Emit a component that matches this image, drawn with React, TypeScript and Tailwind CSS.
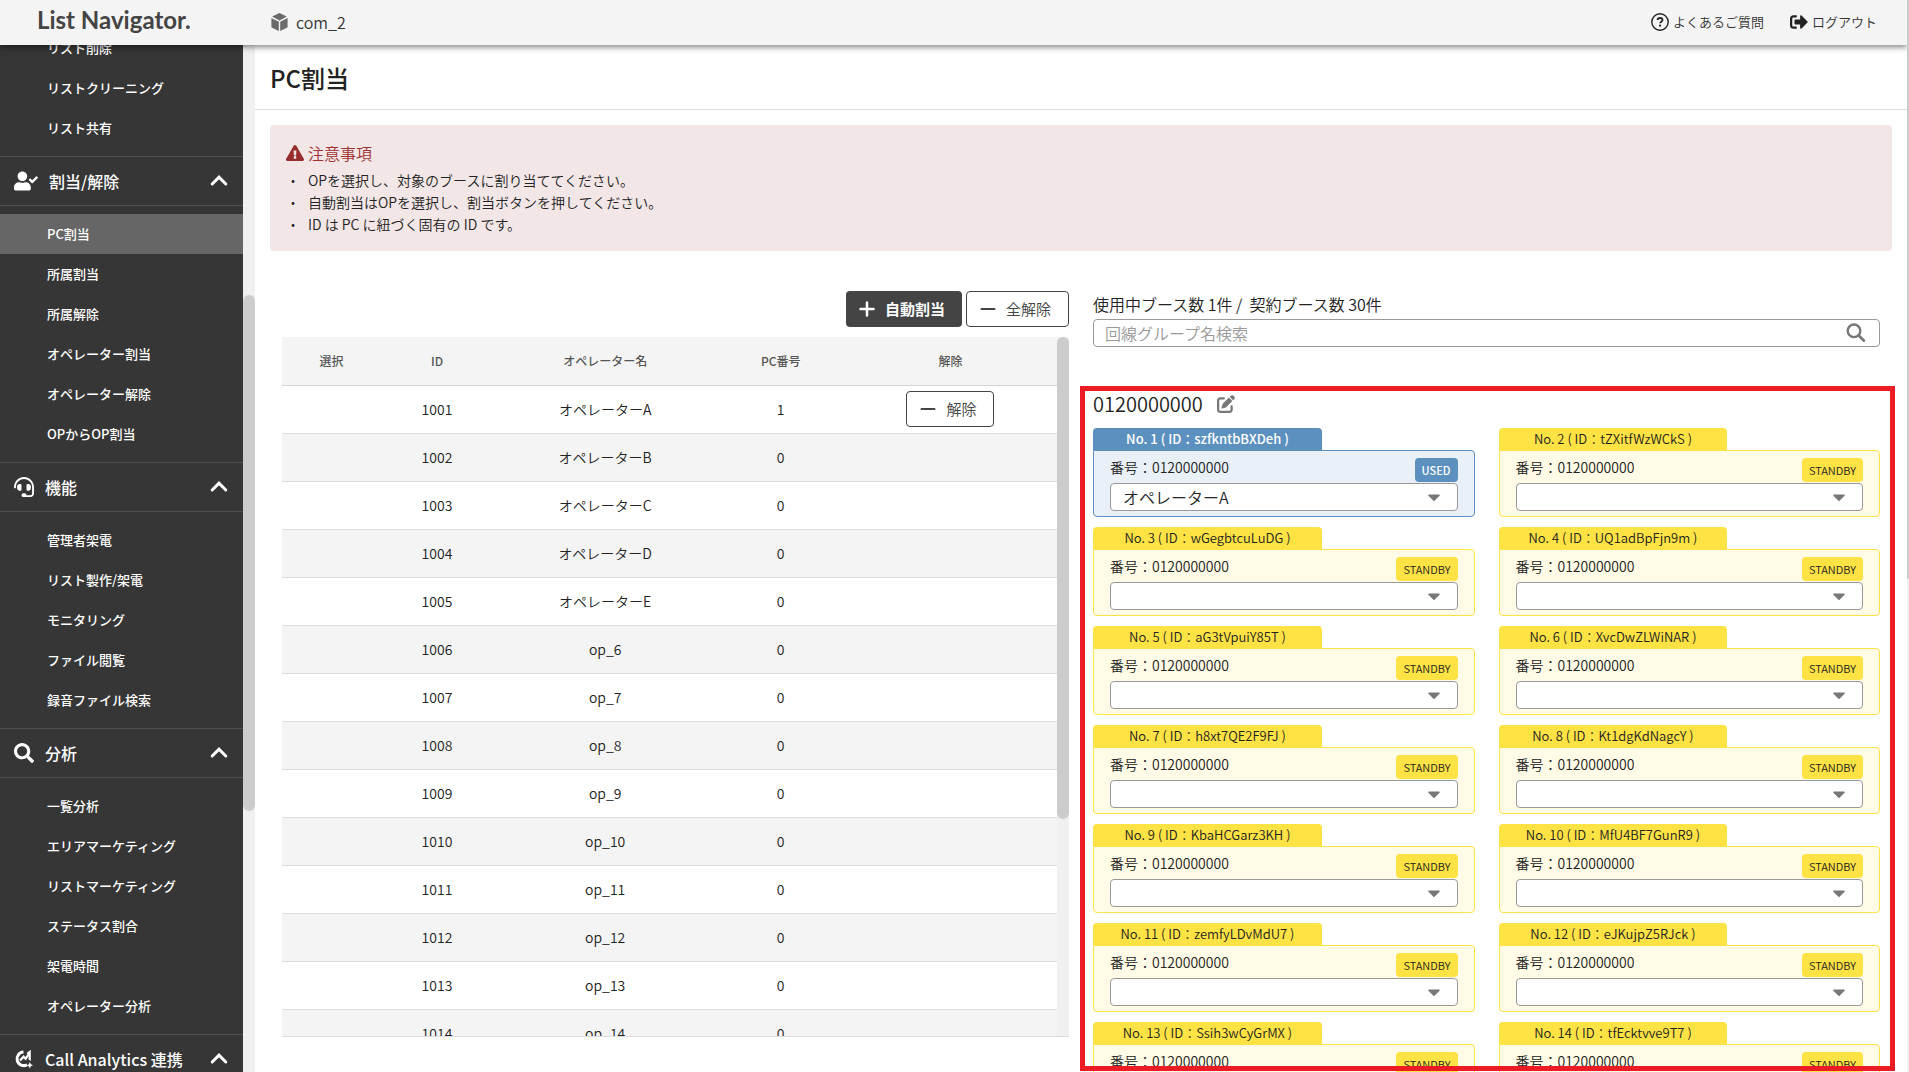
import { useState } from 'react';
import type { ReactNode } from 'react';
import { FaUserCheck, FaHeadset, FaSearch, FaExclamationTriangle, FaSignOutAlt, FaCaretDown } from 'react-icons/fa';
import { FaPenToSquare } from 'react-icons/fa6';

type MenuSection = {
  title: string;
  icon: ReactNode;
  items: string[];
};

const listItems = ['リスト削除', 'リストクリーニング', 'リスト共有'];

const sections: MenuSection[] = [
  {
    title: '割当/解除',
    icon: <FaUserCheck className="h-5 w-6" />,
    items: ['PC割当', '所属割当', '所属解除', 'オペレーター割当', 'オペレーター解除', 'OPからOP割当'],
  },
  {
    title: '機能',
    icon: <FaHeadset className="h-5 w-5" />,
    items: ['管理者架電', 'リスト製作/架電', 'モニタリング', 'ファイル閲覧', '録音ファイル検索'],
  },
  {
    title: '分析',
    icon: <FaSearch className="h-5 w-5" />,
    items: ['一覧分析', 'エリアマーケティング', 'リストマーケティング', 'ステータス割合', '架電時間', 'オペレーター分析'],
  },
  {
    title: 'Call Analytics 連携',
    icon: <CallAnalyticsIcon />,
    items: [],
  },
];

const operators = [
  ...['A', 'B', 'C', 'D', 'E'].map((letter, i) => ({ id: 1001 + i, name: `オペレーター${letter}`, pc: i === 0 ? 1 : 0 })),
  ...Array.from({ length: 10 }, (_, i) => ({ id: 1006 + i, name: `op_${6 + i}`, pc: 0 })),
];

const boothIds = [
  'szfkntbBXDeh',
  'tZXitfWzWCkS',
  'wGegbtcuLuDG',
  'UQ1adBpFjn9m',
  'aG3tVpuiY85T',
  'XvcDwZLWiNAR',
  'h8xt7QE2F9FJ',
  'Kt1dgKdNagcY',
  'KbaHCGarz3KH',
  'MfU4BF7GunR9',
  'zemfyLDvMdU7',
  'eJKujpZ5RJck',
  'Ssih3wCyGrMX',
  'tfEcktvve9T7',
];

const PHONE = '0120000000';

function CallAnalyticsIcon() {
  return (
    <svg className="h-5 w-5" viewBox="0 0 20 20" fill="none">
      <path d="M9.500 3A6.800 6.800 0 1 0 13 15.800" stroke="currentColor" strokeWidth="3" />
      <path d="m6 11.500 3.600-3.800 2 2L15.500 4" stroke="currentColor" strokeWidth="2.200" />
      <path d="M12.500 4 16.800.800V12l-2.300-1.600V5.800z" fill="currentColor" />
      <path d="m15.800 13 1 2.200 2.200 1-2.200 1-1 2.200-1-2.200-2.200-1 2.200-1z" fill="currentColor" />
    </svg>
  );
}

function CubeIcon() {
  return (
    <svg className="h-[18px] w-[17px]" viewBox="0 0 17 18" fill="#6b6b6b">
      <path d="M8.500 0 15.800 3.600 8.500 7.400 1.200 3.600z" />
      <path d="M.400 4.900 7.800 8.700V18L1.100 14.800a1.200 1.200 0 0 1-.700-1.100z" />
      <path d="M16.600 4.900 9.200 8.700V18l6.700-3.200a1.200 1.200 0 0 0 .700-1.100z" />
    </svg>
  );
}

function QuestionIcon() {
  return (
    <svg className="h-[18px] w-[18px]" viewBox="0 0 18 18" fill="none" stroke="#222">
      <circle cx="9" cy="9" r="8.200" strokeWidth="1.400" />
      <path d="M6.600 7.100c0-1.300 1-2.100 2.400-2.100s2.500.800 2.500 2c0 1.600-2.400 1.700-2.400 3.300" strokeWidth="1.800" />
      <circle cx="9.100" cy="12.700" r="1.100" fill="#222" stroke="none" />
    </svg>
  );
}

function Chevron() {
  return (
    <svg className="h-[18px] w-[18px]" viewBox="0 0 18 18" fill="none" stroke="#fff" strokeWidth="3" strokeLinecap="round">
      <path d="m2.200 12 6.800-6.800 6.800 6.800" />
    </svg>
  );
}

function MinusIcon() {
  return (
    <svg className="h-4 w-4" viewBox="0 0 16 16" stroke="#444" strokeWidth="2" strokeLinecap="round">
      <path d="M1.500 8h13" />
    </svg>
  );
}

function PlusIcon() {
  return (
    <svg className="h-4 w-4" viewBox="0 0 16 16" stroke="#fff" strokeWidth="2.500" strokeLinecap="round">
      <path d="M1.500 8h13M8 1.500v13" />
    </svg>
  );
}

function Header() {
  return (
    <header className="relative z-10 flex h-[45px] shrink-0 items-center bg-[#f4f4f4] pr-[30px] pb-0.5 shadow-[0_2px_6px_rgba(0,0,0,0.5)]">
      <div className="w-[271px] shrink-0 pb-1 pl-[37px] font-[Lato] text-2xl font-bold text-[#444]">
        List Navigator.
      </div>
      <div className="flex items-center gap-2 text-base text-[#333]">
        <CubeIcon />
        com_2
      </div>
      <nav className="ml-auto flex items-center gap-[26px] text-[13px] text-[#333]">
        <a href="#" className="flex items-center gap-1">
          <QuestionIcon />
          よくあるご質問
        </a>
        <a href="#" className="flex items-center gap-1">
          <FaSignOutAlt className="h-[18px] w-[18px] text-[#222]" />
          ログアウト
        </a>
      </nav>
    </header>
  );
}

function MenuItems({ items }: { items: string[] }) {
  return (
    <ul className="py-2">
      {items.map((item) => (
        <li key={item}>
          <a
            href="#"
            className={`flex h-10 items-center pl-[47px] text-[13px] font-medium ${item === 'PC割当' ? 'bg-[#666]' : ''}`}
          >
            {item}
          </a>
        </li>
      ))}
    </ul>
  );
}

function Sidebar() {
  return (
    <aside className="flex w-[255px] shrink-0 overflow-hidden">
      <nav className="-mt-[25px] flex-1 bg-[#363636] text-white">
        <MenuItems items={listItems} />
        {sections.map((section) => (
          <section key={section.title}>
            <button className="flex h-[50px] w-full items-center gap-[11px] border-y border-[#505050] pr-[15px] pl-[14px] text-base font-medium">
              {section.icon}
              {section.title}
              <span className="ml-auto">
                <Chevron />
              </span>
            </button>
            <MenuItems items={section.items} />
          </section>
        ))}
      </nav>
      <div className="w-3 bg-[#f0f0f0] pt-[250px]">
        <div className="h-[516px] rounded-full bg-[#ccc]" />
      </div>
    </aside>
  );
}

function Notice() {
  return (
    <section className="mx-[15px] mt-[15px] rounded bg-[#f2e6e6] p-4">
      <h2 className="flex h-6 items-center gap-1 text-base text-[#a03333]">
        <FaExclamationTriangle className="h-[18px] w-[18px] text-[#962d2d]" />
        注意事項
      </h2>
      <ul className="mt-1 text-sm leading-[22px] text-[#222]">
        {[
          'OPを選択し、対象のブースに割り当ててください。',
          '自動割当はOPを選択し、割当ボタンを押してください。',
          'ID は PC に紐づく固有の ID です。',
        ].map((line) => (
          <li key={line} className="flex gap-2">
            <span>・</span>
            {line}
          </li>
        ))}
      </ul>
    </section>
  );
}

function OperatorPanel() {
  return (
    <section className="flex min-h-0 flex-col pb-[35px]">
      <div className="mb-2.5 flex justify-end gap-1 text-[15px]">
        <button className="flex h-9 w-[116px] items-center justify-center gap-2.5 rounded bg-[#444] pr-1 font-bold text-white">
          <PlusIcon />
          自動割当
        </button>
        <button className="flex h-9 w-[103px] items-center justify-center gap-2.5 rounded border border-[#444] pr-1 text-[#444]">
          <MinusIcon />
          全解除
        </button>
      </div>
      <div className="flex min-h-0 flex-1 overflow-hidden border-b border-[#ddd]">
        <div className="flex-1">
          <table className="w-full table-fixed text-center">
            <thead className="bg-[#f4f4f4] text-xs text-[#555]">
              <tr className="h-12 border-b border-[#d5d5d5]">
                <th className="w-[12.8%] font-medium">選択</th>
                <th className="w-[14.4%] font-medium">ID</th>
                <th className="w-[29%] font-medium">オペレーター名</th>
                <th className="w-[16.3%] font-medium">PC番号</th>
                <th className="font-medium">解除</th>
              </tr>
            </thead>
            <tbody className="text-sm text-[#222]">
              {operators.map((op) => (
                <tr key={op.id} className="h-12 border-b border-[#ddd] even:bg-[#f4f4f4]">
                  <td />
                  <td>{op.id}</td>
                  <td>{op.name}</td>
                  <td>{op.pc}</td>
                  <td>
                    {op.pc > 0 && (
                      <button className="mx-auto flex h-9 w-[88px] items-center justify-center gap-2.5 rounded border border-[#444] bg-white pr-1 text-[15px] text-[#444]">
                        <MinusIcon />
                        解除
                      </button>
                    )}
                  </td>
                </tr>
              ))}
            </tbody>
          </table>
        </div>
        <div className="w-3 bg-[#f0f0f0]">
          <div className="h-[69%] rounded-full bg-[#ccc]" />
        </div>
      </div>
    </section>
  );
}

function Booth({ no, id }: { no: number; id: string }) {
  const used = no === 1;
  const [operator, setOperator] = useState(used ? 'オペレーターA' : '');

  return (
    <article>
      <h3
        className={`h-[22px] w-3/5 rounded-t text-center text-[13px] leading-[22px] ${
          used ? 'bg-[#5c90bf] font-medium text-white' : 'bg-[#ffe244] text-[#222]'
        }`}
      >
        No. {no} ( ID：{id} )
      </h3>
      <div
        className={`rounded-b rounded-tr border px-4 pb-[5px] ${
          used ? 'border-[#5c90bf] bg-[#e9f0f7]' : 'border-[#ffe244] bg-[#fffbe6]'
        }`}
      >
        <div className="flex h-8 items-center justify-between">
          <label htmlFor={`booth-${no}`} className="text-sm text-[#222]">
            番号：{PHONE}
          </label>
          <span
            className={`mb-px self-end rounded px-[7px] text-[11px] leading-6 ${
              used ? 'bg-[#5c90bf] font-medium text-white' : 'bg-[#ffe244] text-[#222]'
            }`}
          >
            {used ? 'USED' : 'STANDBY'}
          </span>
        </div>
        <div className="relative">
          <select
            id={`booth-${no}`}
            value={operator}
            onChange={(e) => setOperator(e.target.value)}
            className="block h-7 w-full appearance-none rounded border border-[#999] bg-white px-3 text-base leading-6 text-[#222]"
          >
            <option value="" />
            {operators.map((op) => (
              <option key={op.id} value={op.name}>
                {op.name}
              </option>
            ))}
          </select>
          <FaCaretDown className="pointer-events-none absolute top-1 right-4 h-5 w-4 text-[#777]" />
        </div>
      </div>
    </article>
  );
}

function BoothPanel() {
  return (
    <section className="flex min-h-0 flex-col">
      <p className="mb-0.5 text-base leading-[26px] text-[#222]">使用中ブース数 1件 /&nbsp; 契約ブース数 30件</p>
      <div className="relative">
        <input
          type="text"
          aria-label="回線グループ名検索"
          placeholder="回線グループ名検索"
          className="block h-7 w-full rounded border border-[#999] px-[11px] text-base placeholder:text-[#999]"
        />
        <svg className="absolute top-1 right-[14px] h-5 w-5" viewBox="0 0 20 20" fill="none" stroke="#777" strokeLinecap="round">
          <circle cx="8" cy="7.800" r="6.300" strokeWidth="2.400" />
          <path d="m12.700 12.500 5.300 5.200" strokeWidth="2.600" />
        </svg>
      </div>
      <div className="relative mt-[39px] min-h-0 flex-1 pt-1">
        <h2 className="mb-2.5 flex h-7 items-center gap-[14px] text-xl text-[#222]">
          {PHONE}
          <button aria-label="edit">
            <FaPenToSquare className="h-[18px] w-[18px] text-[#777]" />
          </button>
        </h2>
        <div className="grid grid-cols-2 gap-x-6 gap-y-2.5">
          {boothIds.map((id, i) => (
            <Booth key={id} no={i + 1} id={id} />
          ))}
        </div>
        {/* Highlight frame over the booth list */}
        <div className="pointer-events-none absolute top-0 -right-[15px] bottom-px -left-[13px] border-[5px] border-[#ed1c24]" />
      </div>
    </section>
  );
}

export default function App() {
  return (
    <div className="flex h-screen overflow-hidden bg-white font-['Noto_Sans_CJK_JP',sans-serif] font-[350]">
      <div className="flex min-w-0 flex-1 flex-col overflow-hidden">
        <Header />
        <div className="flex min-h-0 flex-1">
          <Sidebar />
          <main className="flex min-w-0 flex-1 flex-col">
            <h1 className="flex h-[65px] shrink-0 items-center border-b border-[#ddd] px-[15px] pt-px text-2xl font-medium text-[#222]">
              PC割当
            </h1>
            <Notice />
            <div className="mt-10 grid min-h-0 flex-1 grid-cols-2 gap-6 px-[27px]">
              <OperatorPanel />
              <BoothPanel />
            </div>
          </main>
        </div>
      </div>
      <div className="w-0.5 bg-[#f0f0f0]">
        <div className="h-[54%] bg-[#ccc]" />
      </div>
    </div>
  );
}
